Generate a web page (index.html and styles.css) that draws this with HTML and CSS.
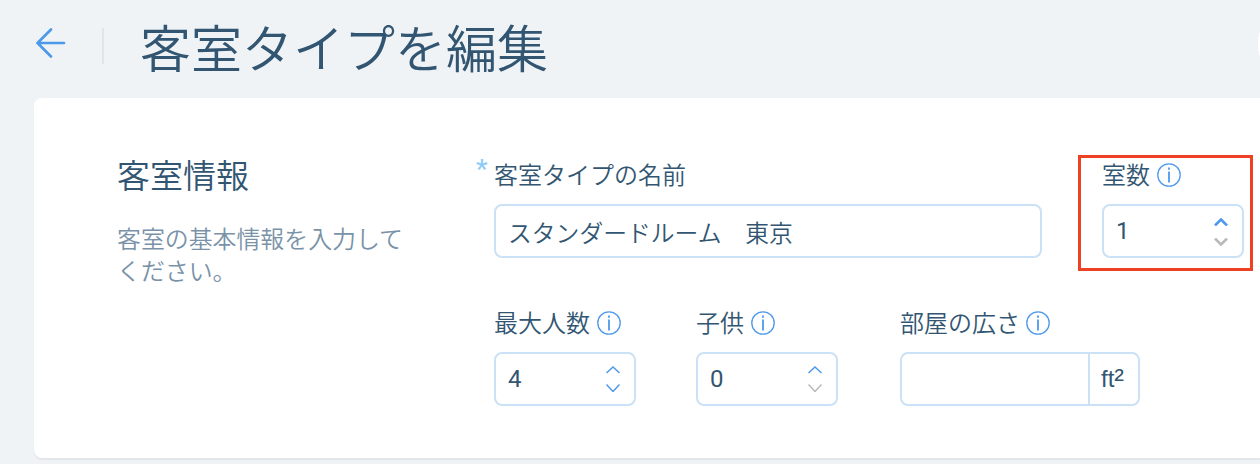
FILE: index.html
```html
<!DOCTYPE html>
<html lang="ja">
<head>
    <meta charset="UTF-8">
    <meta name="viewport" content="width=device-width, initial-scale=1.0">
    <title>客室タイプを編集</title>
    <link rel="stylesheet" href="styles.css">
</head>
<body>

    <!-- Header -->
    <header>
        <a href="#" class="back" aria-label="戻る">
            <svg width="32" height="32" viewBox="0 0 32 32"><path d="M17 2.5L3.5 16L17 29.5M3.5 16H30"/></svg>
        </a>
        <h1>客室タイプを編集</h1>
        <button class="cancel" aria-label="キャンセル"></button>
    </header>

    <!-- Card -->
    <main class="card">
        <div class="intro">
            <h2>客室情報</h2>
            <p>客室の基本情報を入力してください。</p>
        </div>

        <form>
            <div class="row">
                <div class="field name required">
                    <div class="label"><span>客室タイプの名前</span></div>
                    <div class="input">スタンダードルーム　東京</div>
                </div>
                <div class="field number highlight">
                    <div class="label"><span>室数</span>
                        <svg class="info" viewBox="0 0 24 24"><circle cx="12" cy="12" r="11.2"/><path d="M12 8.5V19.5M12 4.5V6.7"/></svg>
                    </div>
                    <div class="input">
                        <span>1</span>
                        <div class="arrows bold">
                            <svg viewBox="0 0 14 8"><path d="M1 7.5L7 1.5L13 7.5"/></svg>
                            <svg class="off" viewBox="0 0 14 8"><path d="M1 .5L7 6.5L13 .5"/></svg>
                        </div>
                    </div>
                </div>
            </div>

            <div class="row">
                <div class="field number">
                    <div class="label"><span>最大人数</span>
                        <svg class="info" viewBox="0 0 24 24"><circle cx="12" cy="12" r="11.2"/><path d="M12 8.5V19.5M12 4.5V6.7"/></svg>
                    </div>
                    <div class="input">
                        <span>4</span>
                        <div class="arrows">
                            <svg viewBox="0 0 14 8"><path d="M.5 7L7 1L13.5 7"/></svg>
                            <svg viewBox="0 0 14 8"><path d="M.5 .5L7 7.5L13.5 .5"/></svg>
                        </div>
                    </div>
                </div>
                <div class="field number">
                    <div class="label"><span>子供</span>
                        <svg class="info" viewBox="0 0 24 24"><circle cx="12" cy="12" r="11.2"/><path d="M12 8.5V19.5M12 4.5V6.7"/></svg>
                    </div>
                    <div class="input">
                        <span>0</span>
                        <div class="arrows">
                            <svg viewBox="0 0 14 8"><path d="M.5 7L7 1L13.5 7"/></svg>
                            <svg class="off" viewBox="0 0 14 8"><path d="M.5 .5L7 7.5L13.5 .5"/></svg>
                        </div>
                    </div>
                </div>
                <div class="field size">
                    <div class="label"><span>部屋の広さ</span>
                        <svg class="info" viewBox="0 0 24 24"><circle cx="12" cy="12" r="11.2"/><path d="M12 8.5V19.5M12 4.5V6.7"/></svg>
                    </div>
                    <div class="input"><div class="unit">ft<span>²</span></div></div>
                </div>
            </div>
        </form>
    </main>

</body>
</html>
```

FILE: styles.css
```css
*, *::before, *::after {
    box-sizing: border-box;
}

body {
    margin: 0;
    height: 464px;
    overflow: hidden;
    background: #eff3f6;
    color: #325672;
    font-family: "Liberation Sans", "Noto Sans CJK JP", sans-serif;
    font-weight: 350;
}

h1, h2, p {
    margin: 0;
    font-weight: 350;
}

svg {
    fill: none;
    stroke: #4d99ea;
}

/* Header */
header {
    display: flex;
    align-items: center;
    height: 98px;
    padding: 0 0 6px 34px;
}

.back {
    display: flex;
    align-items: center;
    width: 70px;
    height: 36px;
    border-right: 2px solid #dfe5eb;
}

.back svg {
    stroke-width: 2.7;
    stroke-linecap: round;
    margin-top: -6px;
}

h1 {
    margin: 0 0 0 36px;
    font-family: "Noto Sans CJK JP", sans-serif;
    font-size: 51px;
    line-height: 60px;
    white-space: nowrap;
}

.cancel {
    width: 2px;
    height: 24px;
    margin: 0 0 4px auto;
    padding: 0;
    border: none;
    border-radius: 2px 0 0 2px / 12px 0 0 12px;
    background: #fff;
}

/* Card */
.card {
    display: flex;
    height: 360px;
    margin-left: 34px;
    padding: 62px 0 0 83px;
    border-radius: 8px 0 0 8px;
    background: #fff;
    box-shadow: 0 2px 1px #e2e6ea;
}

.intro {
    flex: none;
    width: 377px;
    font-family: "Noto Sans CJK JP", sans-serif;
}

.intro h2 {
    margin-top: -3px;
    font-size: 33px;
    line-height: 34px;
}

.intro p {
    width: 290px;
    margin-top: 31px;
    font-size: 23.9px;
    line-height: 32px;
    color: #7a92a8;
}

/* Form */
.row {
    display: flex;
    gap: 60px;
    margin-bottom: 50px;
}

.field {
    position: relative;
}

.label {
    display: flex;
    align-items: center;
    gap: 7px;
    height: 30px;
    margin-bottom: 14px;
    font-family: "Noto Sans CJK JP", sans-serif;
    font-size: 24px;
    white-space: nowrap;
}

.label span {
    padding-bottom: 4px;
}

.info {
    width: 24px;
    height: 24px;
    stroke-width: 1.3;
}

.info path {
    stroke-width: 1.8;
}

.input {
    display: flex;
    align-items: center;
    justify-content: space-between;
    height: 54px;
    padding: 0 12px;
    border: 2px solid #cbe1f5;
    border-radius: 8px;
    font-size: 24px;
}

.name {
    width: 548px;
}

.name .input {
    font-size: 23.8px;
}

.number {
    width: 142px;
}

.number .input {
    padding: 0 14px 0 12px;
    font-family: Roboto, sans-serif;
    font-weight: 400;
}

.size {
    width: 240px;
    margin-left: 2px;
}

.size .label {
    gap: 6px;
}

.size .input {
    justify-content: flex-end;
    padding: 0;
}

.unit {
    width: 50px;
    height: 100%;
    padding-left: 11px;
    border-left: 2px solid #cbe1f5;
    line-height: 49px;
}

.unit span {
    font-size: 29px;
    line-height: 1;
    vertical-align: -2px;
}

.arrows {
    display: flex;
    flex-direction: column;
    gap: 10px;
}

.arrows svg {
    display: block;
    width: 14px;
    height: 8px;
    stroke-width: 1.5;
}

.arrows.bold {
    gap: 12px;
    padding-top: 2px;
}

.arrows.bold svg {
    stroke-width: 2.6;
}

.arrows .off {
    stroke: #b9b9b9;
}

.required::before {
    content: "*";
    position: absolute;
    top: -6px;
    left: -18px;
    font-family: Roboto, sans-serif;
    font-size: 26px;
    font-weight: 500;
    color: #8fcbf8;
}

/* Red frame around the room count */
.highlight::after {
    content: "";
    position: absolute;
    top: -5px;
    left: -24px;
    width: 175px;
    height: 116px;
    border: 3px solid #ee4023;
}
```
